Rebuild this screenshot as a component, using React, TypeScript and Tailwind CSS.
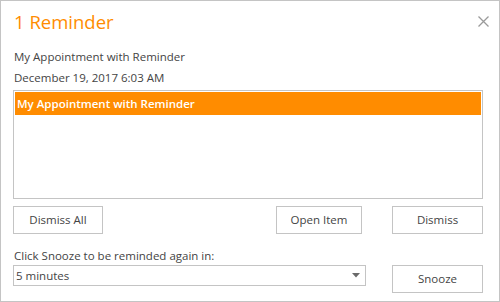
import React from "react";

const font = { fontFamily: '"Open Sans", "Noto Sans", sans-serif' };

function Btn({ label, w }: { label: string; w: string }) {
  return (
    <button
      className={`h-[28px] ${w} border border-[#c4c4c4] bg-white text-[11.5px] text-[#444] leading-none`}
    >
      {label}
    </button>
  );
}

export default function App() {
  return (
    <div
      className="w-[500px] h-[302px] border border-[#c4c4c4] bg-white pl-[12px] pr-[16px] flex flex-col text-[#444]"
      style={font}
    >
      <div className="flex items-start justify-between h-[46px] pt-[8px]">
        <div className="text-[18.5px] text-[#ff8c00] leading-[26px] pl-[1px]">1 Reminder</div>
        <svg width="11" height="11" viewBox="0 0 11 11" className="mt-[7px] mr-[-6px]">
          <path d="M0.5 0.5 L10.5 10.5 M10.5 0.5 L0.5 10.5" stroke="#9a9a9a" strokeWidth="1.3" />
        </svg>
      </div>
      <div className="text-[11.5px] leading-[20px] pl-[1px]">My Appointment with Reminder</div>
      <div className="text-[11.5px] leading-[20px] pl-[1px] mt-[1px]">December 19, 2017 6:03 AM</div>
      <div className="mt-[2px] h-[109px] border border-[#c4c4c4] p-[1px]">
        <div className="h-[23px] bg-[#ff8c00] text-white text-[11.5px] font-semibold leading-[23px] pl-[2px]">
          My Appointment with Reminder
        </div>
      </div>
      <div className="mt-[7px] flex items-center">
        <Btn label="Dismiss All" w="w-[90px]" />
        <div className="ml-auto flex gap-[30px]">
          <Btn label="Open Item" w="w-[86px]" />
          <Btn label="Dismiss" w="w-[91px]" />
        </div>
      </div>
      <div className="mt-[13px] text-[11.5px] leading-[18px] pl-[1px]">Click Snooze to be reminded again in:</div>
      <div className="flex items-start">
        <div className="w-[353px] h-[21px] border border-[#c4c4c4] flex items-center justify-between pl-[2px] pr-[5px] text-[11.5px]">
          <span>5 minutes</span>
          <svg width="8" height="5" viewBox="0 0 8 5">
            <path d="M0 0 L8 0 L4 4.5 Z" fill="#6a6a6a" />
          </svg>
        </div>
        <div className="ml-auto">
          <Btn label="Snooze" w="w-[91px]" />
        </div>
      </div>
    </div>
  );
}
